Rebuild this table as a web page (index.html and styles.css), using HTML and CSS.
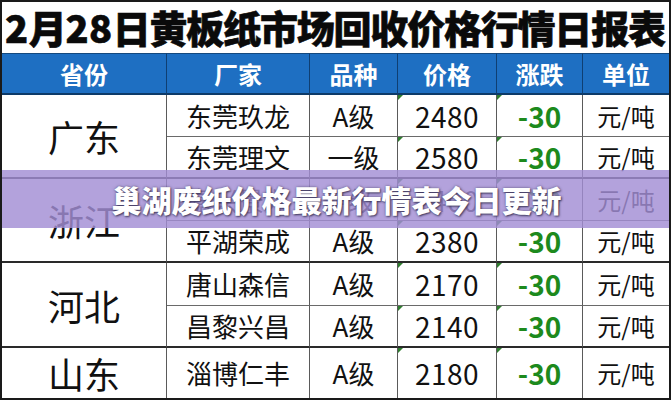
FILE: index.html
```html
<!DOCTYPE html>
<html lang="zh-CN">
<head>
<meta charset="utf-8">
<title>黄板纸市场回收价格行情日报表</title>
<link rel="stylesheet" href="styles.css">
</head>
<body>
<div class="sheet">
  <div class="title"><span class="dg">2</span>月<span class="dg">28</span>日黄板纸市场回收价格行情日报表</div>
  <div class="grid">
    <div class="cell head">省份</div>
    <div class="cell head">厂家</div>
    <div class="cell head">品种</div>
    <div class="cell head">价格</div>
    <div class="cell head">涨跌</div>
    <div class="cell head last-col">单位</div>

    <div class="cell prov span2 gend">广东</div>
    <div class="cell co">东莞玖龙</div><div class="cell gr">A级</div><div class="cell num tri">2480</div><div class="cell chg tri">-30</div><div class="cell unit last-col">元/吨</div>
    <div class="cell co gend">东莞理文</div><div class="cell gr gend">一级</div><div class="cell num tri gend">2580</div><div class="cell chg tri gend">-30</div><div class="cell unit last-col gend">元/吨</div>

    <div class="cell prov span2 gend">浙江</div>
    <div class="cell co">嘉兴景兴</div><div class="cell gr">A级</div><div class="cell num tri">2400</div><div class="cell chg tri">-30</div><div class="cell unit last-col">元/吨</div>
    <div class="cell co gend">平湖荣成</div><div class="cell gr gend">A级</div><div class="cell num tri gend">2380</div><div class="cell chg tri gend">-30</div><div class="cell unit last-col gend">元/吨</div>

    <div class="cell prov span2 gend">河北</div>
    <div class="cell co">唐山森信</div><div class="cell gr">A级</div><div class="cell num tri">2170</div><div class="cell chg tri">-30</div><div class="cell unit last-col">元/吨</div>
    <div class="cell co gend">昌黎兴昌</div><div class="cell gr gend">A级</div><div class="cell num tri gend">2140</div><div class="cell chg tri gend">-30</div><div class="cell unit last-col gend">元/吨</div>

    <div class="cell prov last-row">山东</div>
    <div class="cell co last-row">淄博仁丰</div><div class="cell gr last-row">A级</div><div class="cell num tri last-row">2180</div><div class="cell chg tri last-row">-30</div><div class="cell unit last-col last-row">元/吨</div>
  </div>
  <div class="banner">巢湖废纸价格最新行情表今日更新</div>
</div>
</body>
</html>
```

FILE: styles.css
```css
html, body {
  margin: 0;
  padding: 0;
  background: #ffffff;
}

.sheet {
  position: relative;
  width: 671px;
  height: 400px;
  box-sizing: border-box;
  border: 2px solid #1a1a1a;
  overflow: hidden;
  font-family: "Noto Sans CJK SC", "Noto Sans", sans-serif;
  color: #111;
}

.title {
  height: 51px;
  line-height: 50px;
  font-size: 38px;
  font-weight: 900;
  color: #0a0a0a;
  white-space: nowrap;
  padding-left: 3px;
  letter-spacing: -1.2px;
  -webkit-text-stroke: 0.6px #0a0a0a;
}

.title .dg {
  letter-spacing: 0.5px;
}

.grid {
  display: grid;
  grid-template-columns: 165px 143px 88px 99px 86px 86px;
  grid-template-rows: 42px 42px 42px 42px 42px 43px 42px 50px;
}

.cell {
  box-sizing: border-box;
  display: flex;
  align-items: center;
  justify-content: center;
  white-space: nowrap;
  border-right: 1px solid #5a5a5a;
  border-bottom: 1px solid #6a6a6a;
  line-height: 1;
}

.last-col { border-right: none; }
.last-row { border-bottom: none; }
.gend { border-bottom: 2px solid #2a2a2a; }

.span2 { grid-row: span 2; }

.head {
  background: #1e6fc2;
  color: #ffffff;
  font-size: 24px;
  font-weight: 700;
  border-top: 1px solid #14497f;
  border-right: 1px solid #0f3f72;
  border-bottom: 2px solid #0d3a68;
}

.head.last-col { border-right: none; }

.prov {
  font-size: 36px;
  font-weight: 400;
  color: #111;
}

.co, .gr {
  font-size: 26px;
  font-weight: 400;
}

.num {
  font-size: 28px;
  font-weight: 400;
  letter-spacing: 0.5px;
}

.chg {
  font-size: 28px;
  font-weight: 700;
  color: #1d8a1d;
}

.unit {
  font-size: 24px;
  font-weight: 400;
}

.tri { position: relative; }

.tri::before {
  content: "";
  position: absolute;
  left: 0;
  top: 0;
  width: 0;
  height: 0;
  border-top: 5px solid #2f7d2f;
  border-right: 5px solid transparent;
}

.banner {
  position: absolute;
  left: -2px;
  right: -2px;
  top: 168px;
  height: 58px;
  background: rgba(162, 142, 212, 0.82);
  color: #ffffff;
  font-size: 30px;
  font-weight: 900;
  line-height: 58px;
  text-align: center;
  padding-left: 2px;
  text-shadow: 1px 1px 2px rgba(50, 45, 80, 0.85), 0 0 3px rgba(60, 55, 90, 0.6);
  white-space: nowrap;
}
```
